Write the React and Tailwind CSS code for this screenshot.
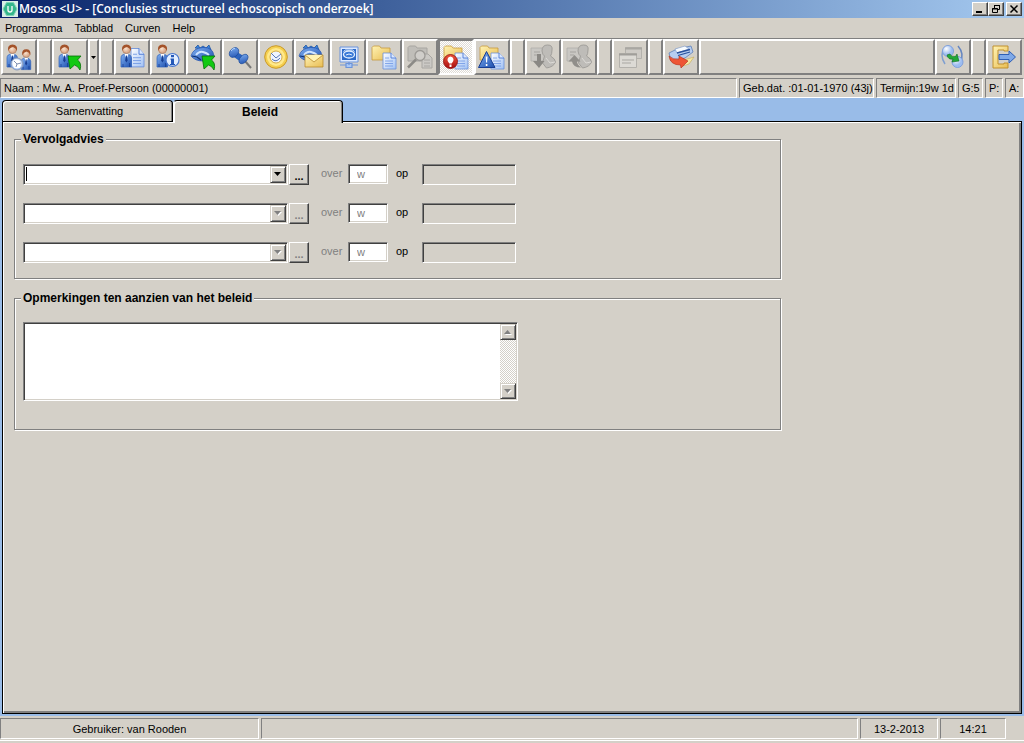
import clsx from "clsx";

function Gradients() {
  return (
    <svg width="0" height="0" className="absolute" aria-hidden="true">
      <defs>
        <linearGradient id="blue" x1="0" y1="0" x2="1" y2="1">
          <stop offset="0" stopColor="#7fb0f2" />
          <stop offset="1" stopColor="#1e4fae" />
        </linearGradient>
        <linearGradient id="folder" x1="0" y1="0" x2="1" y2="1">
          <stop offset="0" stopColor="#fff3b4" />
          <stop offset="1" stopColor="#e8bc52" />
        </linearGradient>
        <linearGradient id="paper" x1="0" y1="0" x2="1" y2="1">
          <stop offset="0" stopColor="#ffffff" />
          <stop offset="1" stopColor="#9fc0f4" />
        </linearGradient>
        <radialGradient id="skin" cx="0.4" cy="0.4">
          <stop offset="0" stopColor="#fbe3cf" />
          <stop offset="1" stopColor="#d9a98a" />
        </radialGradient>
        <radialGradient id="ball" cx="0.35" cy="0.3">
          <stop offset="0" stopColor="#ffffff" />
          <stop offset="1" stopColor="#9dbdf0" />
        </radialGradient>
        <linearGradient id="red" x1="0" y1="0" x2="0" y2="1">
          <stop offset="0" stopColor="#f0553c" />
          <stop offset="1" stopColor="#a80d10" />
        </linearGradient>
      </defs>
    </svg>
  );
}

function Icon({ children }) {
  return (
    <svg width="28" height="28" viewBox="0 0 28 28" aria-hidden="true" className="shrink-0">
      {children}
    </svg>
  );
}

function Person({ transform }) {
  return (
    <g transform={transform}>
      <path d="M2 24V15q0-4 5-4t5.500 4v9z" fill="url(#blue)" stroke="#2c5fb8" strokeWidth="0.7" />
      <path d="M5.500 11l2 5 2-5z" fill="#fff" />
      <path d="M7 12.500l-.8 5 1.200 2 1.200-2-.8-5z" fill="#173d92" />
      <path d="M4 21v3M10.500 20v4" stroke="#173d92" strokeWidth="0.8" />
      <circle cx="7.500" cy="6.500" r="4" fill="url(#skin)" stroke="#a06a4a" strokeWidth="0.5" />
      <path d="M3.200 8Q2 1.500 7.500 1.500T12 8Q11 5 8 4 4.500 4.500 3.200 8z" fill="#a4532a" />
    </g>
  );
}

function GreenArrow() {
  return (
    <path
      d="M12 13h13l-3.500 4Q26 20 24 27q-2-4-5.500-5L14 26z"
      fill="#12c912"
      stroke="#067006"
      strokeWidth="0.8"
    />
  );
}

function Page({ transform }) {
  return (
    <g transform={transform}>
      <path d="M13 10h8l5 5v11H13z" fill="url(#paper)" stroke="#6b8fd8" strokeWidth="0.8" />
      <path d="M21 10v5h5" fill="#dbe8ff" stroke="#3f6fd0" strokeWidth="0.8" />
      <path d="M15 15h4M15 18h8M15 20.500h8M15 23h8" stroke="#6f97e4" strokeWidth="0.8" />
    </g>
  );
}

function Folder() {
  return (
    <path
      d="M2 4.500L3.500 3h6l1.500 2h9v12H2z"
      fill="url(#folder)"
      stroke="#c79a3c"
      strokeWidth="0.8"
    />
  );
}

function Womb() {
  return (
    <g>
      <path d="M5 5l3-3 2 3 3-2 3 2 3-3 2 5z" fill="#3e86dc" stroke="#164a99" strokeWidth="0.7" />
      <path d="M1 13Q3 5 13 4.500T24 13q-3 5-11 5T1 13z" fill="url(#blue)" stroke="#1e4fae" strokeWidth="0.7" />
      <path d="M6 12q3-4 7-3t6 3" fill="none" stroke="#cfe4ff" strokeWidth="2" />
      <path d="M2 13l5 1 4 3" fill="none" stroke="#0e2f70" strokeWidth="1.200" />
    </g>
  );
}

function PatientsIcon() {
  return (
    <Icon>
      <Person />
      <Person transform="translate(14.500 5) scale(0.9)" />
      <circle cx="12" cy="21" r="6" fill="url(#ball)" stroke="#8d9cb8" />
      <circle cx="12" cy="21" r="4.500" fill="#fff" />
      <path d="M9 18l3 3 4-1M12 21l-1 3" fill="none" stroke="#7f90b0" />
    </Icon>
  );
}

function PatientArrowIcon() {
  return (
    <Icon>
      <Person transform="translate(1 0)" />
      <GreenArrow />
    </Icon>
  );
}

function PatientFileIcon() {
  return (
    <Icon>
      <Page transform="translate(0 -6) scale(1 1.150)" />
      <Person transform="translate(1 0)" />
    </Icon>
  );
}

function PatientInfoIcon() {
  return (
    <Icon>
      <Person transform="translate(1 0)" />
      <circle cx="18.500" cy="17" r="6.500" fill="#e4efff" stroke="#4a78cf" strokeWidth="1.200" />
      <path d="M17 12h3v2.200h-3zM16.500 15.500H20V21h1v1.200h-5V21h1v-4.200h-.5z" fill="#2458b8" />
    </Icon>
  );
}

function WombArrowIcon() {
  return (
    <Icon>
      <Womb />
      <GreenArrow />
    </Icon>
  );
}

function PinIcon() {
  return (
    <Icon>
      <path d="M19 18l6 7" stroke="#777" strokeWidth="2" />
      <path d="M8 7l11 7-4 5L5 12z" fill="#2b62bd" />
      <ellipse cx="8" cy="9.500" rx="4" ry="5.500" transform="rotate(42 8 9.500)" fill="url(#blue)" stroke="#1b4a9c" strokeWidth="0.7" />
      <ellipse cx="17.500" cy="16" rx="3.500" ry="5.500" transform="rotate(42 17.500 16)" fill="url(#blue)" stroke="#1b4a9c" strokeWidth="0.7" />
      <path d="M5 8q1.500-3 4-2.500" stroke="#b9d6ff" fill="none" />
    </Icon>
  );
}

function ClockIcon() {
  return (
    <Icon>
      <circle cx="14" cy="14" r="11.300" fill="#f5cf4f" stroke="#c9992a" />
      <circle cx="14" cy="14" r="9" fill="#ffe98c" />
      <circle cx="14" cy="14" r="6" fill="#eef4ff" stroke="#c9992a" strokeWidth="0.8" />
      <path d="M9 10l5 5 5-4M10 16q4 4 8-1" fill="none" stroke="#5a77b8" />
    </Icon>
  );
}

function WombMailIcon() {
  return (
    <Icon>
      <Womb />
      <path d="M7 12h18v12H7z" fill="url(#folder)" stroke="#b98a2e" strokeWidth="0.8" />
      <path d="M7 12l9 7 9-7" fill="#fff3b4" stroke="#b98a2e" strokeWidth="0.8" />
    </Icon>
  );
}

function MonitorIcon() {
  return (
    <Icon>
      <path d="M6 4h18v15H6z" fill="#dce9ff" stroke="#6c94da" />
      <path d="M8 6h14v11H8z" fill="#2e6bc9" />
      <ellipse cx="15" cy="11.500" rx="5.500" ry="3.500" fill="#3a7ad8" stroke="#e3efff" strokeWidth="1.300" />
      <path d="M9.500 8.500l2-1.500h7l2 1.500M12 12q3-2 6 0" fill="none" stroke="#e3efff" />
      <path d="M15 19v3M6 22h6M18 22h6M12 20.500h6v4h-6z" fill="#a9c7f5" stroke="#6c94da" strokeWidth="1.200" />
    </Icon>
  );
}

function FolderPageIcon() {
  return (
    <Icon>
      <Folder />
      <Page />
    </Icon>
  );
}

function FolderSearchIcon() {
  return (
    <Icon>
      <path d="M2 4.500L3.500 3h6l1.500 2h10v13H2z" fill="#c0beb9" stroke="#a8a6a2" />
      <path d="M16 11h6l4 4v10H16z" fill="#cbc9c5" stroke="#a8a6a2" />
      <path d="M18 17h6M18 20h6M18 23h6" stroke="#a8a6a2" />
      <circle cx="14" cy="12.500" r="5" fill="#d0ceca" stroke="#9c9a96" strokeWidth="1.300" />
      <path d="M10 16.500l-8 8" stroke="#8c8a86" strokeWidth="2.500" />
    </Icon>
  );
}

function FolderAlertIcon() {
  return (
    <Icon>
      <Folder />
      <Page />
      <circle cx="8.500" cy="18.500" r="7" fill="url(#red)" stroke="#8a0c0c" strokeWidth="0.8" />
      <path d="M7.300 20.500Q5 17.500 5.500 16q.7-2.500 3-2.500t3 2.500q.5 1.500-1.800 4.500zM7.500 21.500h2V24h-2z" fill="#fff" />
    </Icon>
  );
}

function FolderWarningIcon() {
  return (
    <Icon>
      <Folder />
      <Page />
      <path d="M8.500 8.500L17 24.500H0.500z" fill="url(#blue)" stroke="#173d92" />
      <path d="M7.700 13.500h1.800l-.4 6h-1zM7.800 21h1.600v2H7.800z" fill="#fff" />
    </Icon>
  );
}

function GreyPerson({ up }) {
  return (
    <Icon>
      <path d="M2 5h16v13H2z" fill="#c9c7c3" stroke="#b0aeaa" strokeWidth="0.8" />
      <path d="M5 9h6M5 12h4" stroke="#a5a39f" />
      <path d="M13 8q0-6 5.500-6T23 7q0 4-1.500 6 5 3 5 6-2 5-9 6l-4-5 2-7q-2-1-2.500-5z" fill="#bebcb8" stroke="#a19f9b" />
      <path d="M17 15l4 5 5-1" fill="none" stroke="#dddbd7" />
      {up ? (
        <path d="M9.500 12l6 6.500H12q0 3 4 6-8 0-9-6H3.500z" fill="#908e8a" />
      ) : (
        <path d="M8 11h4v7h3.500L10 25l-6-7h4z" fill="#8a8884" />
      )}
    </Icon>
  );
}

function WindowsIcon() {
  return (
    <Icon>
      <path d="M9.500 4.500h16v11h-16z" fill="#cecbc6" stroke="#b3b1ac" />
      <path d="M9 5.500h17" stroke="#a9a7a2" strokeWidth="2" />
      <path d="M3.500 10.500h17v14h-17z" fill="#dcdad5" stroke="#b3b1ac" />
      <path d="M3 11.500h18" stroke="#a09e9a" strokeWidth="2" />
      <path d="M6 17h12M6 20h9" stroke="#a9a7a2" />
    </Icon>
  );
}

function PrinterIcon() {
  return (
    <Icon>
      <path d="M2 10L10 6l14-3 2 6-8 6-14 3z" fill="#b6cdf0" stroke="#5d7fb8" strokeWidth="0.8" />
      <path d="M8 6l10-3 4 3-12 4z" fill="#f7fbff" stroke="#7794c4" strokeWidth="0.6" />
      <path d="M10 10l13-3.500M11 12.500l12-3.500" stroke="#27509c" strokeWidth="1.300" />
      <path d="M17 17l10-3-5 7-6 2z" fill="#f6e8a4" stroke="#c3aa5c" strokeWidth="0.6" />
      <path d="M2 13q4 4 10 3v-3l9 5-7 7-.5-3Q3 22 2 13z" fill="#ee5534" stroke="#b42c16" strokeWidth="0.6" />
    </Icon>
  );
}

function SwapIcon() {
  return (
    <Icon>
      <path d="M6 4q-6 8 0 17" fill="none" stroke="#7f9fd0" strokeWidth="1.500" />
      <path d="M19 3q7 8 2 17" fill="none" stroke="#6686c0" strokeWidth="1.500" />
      <circle cx="9" cy="8" r="5.500" fill="url(#ball)" stroke="#7fa0dc" />
      <circle cx="18.500" cy="19" r="5.500" fill="url(#ball)" stroke="#7fa0dc" />
      <path d="M8 12q1 5 6 4l-1 3 7-1-2-7-1.500 2.500Q12 14 11 11z" fill="#22a838" stroke="#0d6c1e" strokeWidth="0.6" />
    </Icon>
  );
}

function ExitIcon() {
  return (
    <Icon>
      <path d="M3 3h15v5h-4V7H8v14h6v-1h4v5H3z" fill="url(#folder)" stroke="#c0912f" />
      <path d="M9 11.500h10V8l6.500 6-6.500 6v-3.500H9z" fill="#7fa9e8" stroke="#2f5fb5" />
    </Icon>
  );
}

const RAISED =
  "border-2 border-t-white border-l-white border-r-[#808080] border-b-[#808080]";
const SUNKEN = "border border-t-[#808080] border-l-[#808080] border-r-white border-b-white";
const FIELD =
  "border border-t-[#808080] border-l-[#808080] border-r-white border-b-white shadow-[inset_1px_1px_0_#404040,inset_-1px_-1px_0_#d4d0c8]";
const KNOB =
  "border border-t-[#d4d0c8] border-l-[#d4d0c8] border-r-[#404040] border-b-[#404040] bg-[#d4d0c8] shadow-[inset_1px_1px_0_#fff,inset_-1px_-1px_0_#808080]";

function ToolButton({ label, pressed, children }) {
  return (
    <button
      type="button"
      aria-label={label}
      className={clsx(
        "flex h-9 w-9 shrink-0 items-center justify-center",
        pressed
          ? "border-2 border-t-[#808080] border-l-[#808080] border-r-white border-b-white bg-[repeating-conic-gradient(#fff_0_25%,#dedbd5_0_50%)] bg-size-[2px_2px]"
          : RAISED
      )}
    >
      {children}
    </button>
  );
}

function Spacer({ className = "w-[15px] shrink-0" }) {
  return <div className={clsx("h-9", RAISED, className)} />;
}

function Triangle({ up, disabled }) {
  const d = up ? "M0 4h7L3.500 0z" : "M0 0h7L3.500 4z";
  return (
    <svg width="8" height="5" viewBox="0 0 8 5" aria-hidden="true">
      {disabled && <path d={d} transform="translate(1 1)" fill="#fff" />}
      <path d={d} fill={disabled ? "#808080" : "#000"} />
    </svg>
  );
}

function Toolbar() {
  return (
    <div className="flex border-t border-[#808080] pr-[2px] pb-px pl-px">
      <ToolButton label="Patiënten"><PatientsIcon /></ToolButton>
      <Spacer />
      <ToolButton label="Patiënt kiezen"><PatientArrowIcon /></ToolButton>
      <button type="button" aria-label="Meer" className={clsx("flex h-9 w-[11px] shrink-0 items-center justify-center", RAISED)}>
        <svg width="5" height="3" viewBox="0 0 5 3" aria-hidden="true" className="shrink-0">
          <path d="M0 0h5L2.500 3z" />
        </svg>
      </button>
      <Spacer />
      <ToolButton label="Dossier"><PatientFileIcon /></ToolButton>
      <ToolButton label="Patiëntinformatie"><PatientInfoIcon /></ToolButton>
      <ToolButton label="Zwangerschap kiezen"><WombArrowIcon /></ToolButton>
      <ToolButton label="Vastzetten"><PinIcon /></ToolButton>
      <ToolButton label="Termijn"><ClockIcon /></ToolButton>
      <ToolButton label="Brief"><WombMailIcon /></ToolButton>
      <ToolButton label="Echo"><MonitorIcon /></ToolButton>
      <ToolButton label="Documenten"><FolderPageIcon /></ToolButton>
      <ToolButton label="Zoeken"><FolderSearchIcon /></ToolButton>
      <ToolButton label="Conclusies" pressed><FolderAlertIcon /></ToolButton>
      <ToolButton label="Waarschuwingen"><FolderWarningIcon /></ToolButton>
      <Spacer />
      <ToolButton label="Importeren"><GreyPerson /></ToolButton>
      <ToolButton label="Exporteren"><GreyPerson up /></ToolButton>
      <Spacer />
      <ToolButton label="Vensters"><WindowsIcon /></ToolButton>
      <Spacer />
      <ToolButton label="Afdrukken"><PrinterIcon /></ToolButton>
      <Spacer className="flex-1" />
      <ToolButton label="Wisselen"><SwapIcon /></ToolButton>
      <Spacer />
      <ToolButton label="Afsluiten"><ExitIcon /></ToolButton>
    </div>
  );
}

function WindowButton({ label, children }) {
  return (
    <button
      type="button"
      aria-label={label}
      className="flex h-[14px] w-4 items-center justify-center border border-t-white border-l-white border-r-[#404040] border-b-[#404040] bg-[#d4d0c8] shadow-[inset_-1px_-1px_0_#808080]"
    >
      <svg width="10" height="10" viewBox="0 0 10 10" fill="none" stroke="#000" className="shrink-0" aria-hidden="true">
        {children}
      </svg>
    </button>
  );
}

function TitleBar() {
  return (
    <header className="flex h-[18px] items-center bg-linear-to-r from-[#0a246a] to-[#a6caf0] px-[2px]">
      <svg width="16" height="16" viewBox="0 0 16 16" aria-hidden="true">
        <path d="M0 0h16v16H0z" fill="#d9efe6" />
        <path d="M4.500 1.500h7L15 8l-3.500 6.500h-7L1 8z" fill="#35b78c" stroke="#7fd6b6" />
        <path d="M6 5v4q0 2 2 2t2-2V5" fill="none" stroke="#fff" strokeWidth="1.300" />
      </svg>
      <h1 className="ml-px flex-1 text-[12px] leading-4 font-semibold whitespace-nowrap text-white [font-family:'Open_Sans','Noto_Sans',sans-serif]">
        Mosos &lt;U&gt; - [Conclusies structureel echoscopisch onderzoek]
      </h1>
      <div className="flex">
        <WindowButton label="Minimaliseren">
          <path d="M1 8h6" strokeWidth="2" />
        </WindowButton>
        <WindowButton label="Herstellen">
          <path d="M3.500 4V1.500h5v4H7M3 1.500h6M1.500 4.500h5v4h-5zM1 5h6" />
        </WindowButton>
        <div className="w-[2px]" />
        <WindowButton label="Sluiten">
          <path d="M1.500 1.500l7 7M8.500 1.500l-7 7" strokeWidth="1.500" />
        </WindowButton>
      </div>
    </header>
  );
}

function InfoCell({ className, children }) {
  return (
    <div className={clsx("h-5 shrink-0 pl-[3px] leading-[18px] whitespace-nowrap", SUNKEN, className)}>
      {children}
    </div>
  );
}

function AdviceRow({ index, enabled }) {
  const tone = enabled ? "text-black" : "text-[#808080]";
  return (
    <div className="flex h-[21px] items-start leading-[19px]">
      <div className="relative">
        <select
          aria-label={`Vervolgadvies ${index}`}
          disabled={!enabled}
          className={clsx("block h-[21px] w-[265px] appearance-none bg-white pr-5 pl-1 opacity-100 outline-none", FIELD)}
        />
        {enabled && <span className="absolute top-[3px] left-[3px] h-[14px] w-px bg-black" />}
        <span className={clsx("pointer-events-none absolute top-[2px] right-[2px] flex h-[17px] w-4 items-center justify-center", KNOB)}>
          <Triangle disabled={!enabled} />
        </span>
      </div>
      <button
        type="button"
        disabled={!enabled}
        className={clsx(
          "ml-px h-[21px] w-5 border border-t-white border-l-white border-r-[#404040] border-b-[#404040] pt-[2px] leading-4 font-bold shadow-[inset_-1px_-1px_0_#808080]",
          tone
        )}
      >
        ...
      </button>
      <label htmlFor={`weeks-${index}`} className="ml-3 w-[27px] text-[#808080]">
        over
      </label>
      <input
        id={`weeks-${index}`}
        type="text"
        defaultValue="w"
        className={clsx("h-5 w-10 bg-white pl-2 text-[#808080] outline-none", FIELD)}
      />
      <label htmlFor={`date-${index}`} className="ml-2 w-[26px]">
        op
      </label>
      <input
        id={`date-${index}`}
        type="text"
        readOnly
        className={clsx("h-[21px] w-[94px] outline-none", FIELD)}
      />
    </div>
  );
}

function GroupBox({ title, className, children }) {
  return (
    <fieldset
      className={clsx(
        "w-full max-w-[767px] border border-[#808080] px-[6px] shadow-[1px_1px_0_#fff,inset_1px_1px_0_#fff]",
        className
      )}
    >
      <legend className="bg-[#d4d0c8] px-[2px] text-[12px] leading-4 font-bold">{title}</legend>
      <div className="px-[2px]">{children}</div>
    </fieldset>
  );
}

export default function App() {
  return (
    <div className="flex min-h-screen flex-col bg-[#d4d0c8] text-[11px] text-black [font-family:'Liberation_Sans',Arial,sans-serif]">
      <Gradients />
      <TitleBar />
      <nav className="flex h-5 items-center gap-3 pl-[5px]">
        <button type="button">Programma</button>
        <button type="button">Tabblad</button>
        <button type="button">Curven</button>
        <button type="button">Help</button>
      </nav>
      <Toolbar />
      <div className="mt-[2px] flex gap-[2px]">
        <InfoCell className="flex-1">Naam : Mw. A. Proef-Persoon (00000001)</InfoCell>
        <InfoCell className="w-[135px]">Geb.dat. :01-01-1970 (43j)</InfoCell>
        <InfoCell className="w-20">Termijn:19w 1d</InfoCell>
        <InfoCell className="w-[25px]">G:5</InfoCell>
        <InfoCell className="w-[18px]">P:</InfoCell>
        <InfoCell className="w-[19px]">A:</InfoCell>
      </div>

      <main className="flex flex-1 flex-col bg-[#99bce8] px-[2px] pb-[2px]">
        <div role="tablist" className="flex items-end pt-[2px]">
          <button
            type="button"
            role="tab"
            aria-selected="false"
            className="h-[21px] w-[171px] rounded-t-[4px] border border-b-0 border-black bg-[#d4d0c8] pl-1 shadow-[inset_1px_1px_0_#fff,inset_-1px_0_0_#808080]"
          >
            Samenvatting
          </button>
          <button
            type="button"
            role="tab"
            aria-selected="true"
            className="relative -mb-[2px] h-[23px] w-[170px] rounded-t-[4px] border border-b-0 border-l-white bg-[#d4d0c8] border-t-black border-r-black pl-1 text-[12px] font-bold shadow-[inset_1px_1px_0_#fff,inset_-1px_0_0_#808080]"
          >
            Beleid
          </button>
        </div>
        <section className="flex-1 border border-black bg-[#d4d0c8] px-[11px] pt-[9px] shadow-[inset_1px_1px_0_#fff,inset_-2px_-2px_0_#808080]">
          <GroupBox title="Vervolgadvies" className="pb-[15px]">
            <div className="flex flex-col gap-[18px] pt-[17px]">
              <AdviceRow index={1} enabled />
              <AdviceRow index={2} />
              <AdviceRow index={3} />
            </div>
          </GroupBox>
          <GroupBox title="Opmerkingen ten aanzien van het beleid" className="mt-[11px] pb-7">
            <div className={clsx("mt-4 flex h-[79px] w-[495px] bg-white p-px", FIELD)}>
              <textarea
                aria-label="Opmerkingen ten aanzien van het beleid"
                className="flex-1 resize-none overflow-hidden p-1 outline-none"
              />
              <div className="flex w-4 flex-col bg-[repeating-conic-gradient(#fff_0_25%,#d4d0c8_0_50%)] bg-size-[2px_2px]">
                <button type="button" aria-label="Omhoog" className={clsx("flex h-4 items-center justify-center", KNOB)}>
                  <Triangle up disabled />
                </button>
                <div className="flex-1" />
                <button type="button" aria-label="Omlaag" className={clsx("flex h-4 items-center justify-center", KNOB)}>
                  <Triangle disabled />
                </button>
              </div>
            </div>
          </GroupBox>
        </section>
      </main>

      <div className="border-b border-white pt-[2px] pb-px">
        <footer className="flex gap-[2px] text-center leading-5">
          <div className={clsx("h-[21px] w-[259px]", SUNKEN)}>Gebruiker: van Rooden</div>
          <div className={clsx("h-[21px] flex-1", SUNKEN)} />
          <div className={clsx("h-[21px] w-[78px]", SUNKEN)}>13-2-2013</div>
          <div className={clsx("mr-[18px] h-[21px] w-[66px]", SUNKEN)}>14:21</div>
        </footer>
      </div>
      <div className="h-[2px]" />
    </div>
  );
}
